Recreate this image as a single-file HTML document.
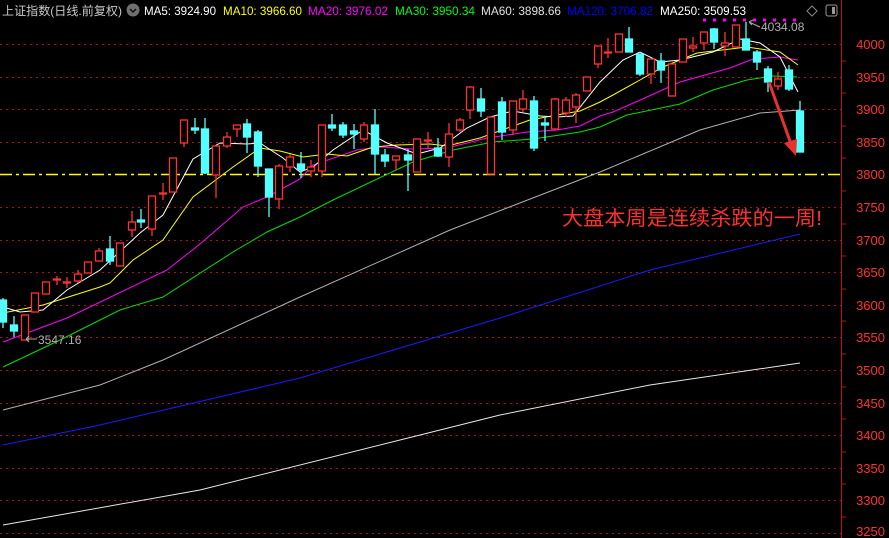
<!DOCTYPE html>
<html><head><meta charset="utf-8"><style>
html,body{margin:0;padding:0;background:#000;width:889px;height:538px;overflow:hidden}
svg{display:block}
text{font-family:"Liberation Sans","Noto Sans CJK SC",sans-serif}
</style></head><body>
<svg width="889" height="538" viewBox="0 0 889 538" xmlns="http://www.w3.org/2000/svg">
<rect width="889" height="538" fill="#000"/>
<g stroke="#b01010" stroke-width="1" stroke-dasharray="2,4">
<line x1="0" y1="44.5" x2="841" y2="44.5"/><line x1="0" y1="77.5" x2="841" y2="77.5"/>
<line x1="0" y1="109.5" x2="841" y2="109.5"/><line x1="0" y1="142.5" x2="841" y2="142.5"/>
<line x1="0" y1="207.5" x2="841" y2="207.5"/><line x1="0" y1="240.5" x2="841" y2="240.5"/>
<line x1="0" y1="272.5" x2="841" y2="272.5"/><line x1="0" y1="305.5" x2="841" y2="305.5"/>
<line x1="0" y1="337.5" x2="841" y2="337.5"/><line x1="0" y1="370.5" x2="841" y2="370.5"/>
<line x1="0" y1="403.5" x2="841" y2="403.5"/><line x1="0" y1="435.5" x2="841" y2="435.5"/>
<line x1="0" y1="468.5" x2="841" y2="468.5"/><line x1="0" y1="500.5" x2="841" y2="500.5"/>
<line x1="0" y1="533.5" x2="841" y2="533.5"/>
</g>
<line x1="0" y1="174.5" x2="841" y2="174.5" stroke="#ffff00" stroke-width="1.5" stroke-dasharray="12,4,3,4"/>
<line x1="841.5" y1="0" x2="841.5" y2="538" stroke="#c01010"/>
<g stroke="#c01010"><line x1="841" y1="61" x2="846" y2="61"/><line x1="841" y1="93" x2="846" y2="93"/><line x1="841" y1="126" x2="846" y2="126"/><line x1="841" y1="158" x2="846" y2="158"/><line x1="841" y1="191" x2="846" y2="191"/><line x1="841" y1="224" x2="846" y2="224"/><line x1="841" y1="256" x2="846" y2="256"/><line x1="841" y1="289" x2="846" y2="289"/><line x1="841" y1="321" x2="846" y2="321"/><line x1="841" y1="354" x2="846" y2="354"/><line x1="841" y1="387" x2="846" y2="387"/><line x1="841" y1="419" x2="846" y2="419"/><line x1="841" y1="452" x2="846" y2="452"/><line x1="841" y1="484" x2="846" y2="484"/><line x1="841" y1="517" x2="846" y2="517"/></g>
<g fill="#ff3232" font-size="13" text-anchor="end">
<text x="885" y="49">4000</text><text x="885" y="82">3950</text><text x="885" y="114">3900</text><text x="885" y="147">3850</text><text x="885" y="179">3800</text><text x="885" y="212">3750</text><text x="885" y="245">3700</text><text x="885" y="277">3650</text><text x="885" y="310">3600</text><text x="885" y="342">3550</text><text x="885" y="375">3500</text><text x="885" y="408">3450</text><text x="885" y="440">3400</text><text x="885" y="473">3350</text><text x="885" y="505">3300</text><text x="885" y="536">3250</text>
</g>
<g fill="none" stroke-width="1">
<polyline stroke="#e8e8e8" points="3,525 200,490 400,440 500,415 650,385 800,363"/>
<polyline stroke="#1a1aff" points="3,445 100,425 300,378 500,318 650,270 800,234"/>
<polyline stroke="#b0b0b0" points="3,410 100,385 163,360 300,297 450,230 600,172 700,130 760,113 800,110"/>
<polyline stroke="#00e000" points="3,367 60,340 120,310 163,297 233,252 267,232 300,217 333,200 413,162 453,150 493,142 533,139 580,132 600,127 627,115 680,104 713,90 747,80 773,76 797,77"/>
<polyline stroke="#ff00ff" points="3,342 67,318 167,270 200,244 243,207 267,197 300,179 313,165 357,150 380,147 413,149 447,148 487,138 527,132 557,130 580,126 600,116 613,112 647,97 680,82 730,68 753,59 780,57 798,60"/>
<polyline stroke="#ffff00" points="3,313 43,305 100,287 110,283 133,260 163,240 193,197 233,167 260,148 280,151 303,157 327,154 347,156 373,147 397,145 430,144 447,146 480,138 513,126 530,120 557,115 580,111 600,102 613,95 640,80 663,67 697,53 747,47 780,52 798,65"/>
<polyline stroke="#ffffff" points="3,307 20,312 43,310 67,290 100,270 140,233 163,215 193,159 220,143 247,144 260,143 283,158 300,172 313,167 333,150 363,130 387,143 417,154 440,148 467,128 490,117 513,111 540,116 557,117 573,116 600,82 623,60 640,52 660,62 680,60 713,52 740,39 760,43 780,57 798,92"/>
</g>
<g stroke="#ff3232" stroke-width="1.3" fill="#000">
<line x1="25" y1="315" x2="25" y2="340"/><rect x="21.5" y="315" width="7" height="25"/>
<rect x="31.5" y="293" width="7" height="19"/>
<rect x="42.5" y="282" width="7" height="12"/>
<line x1="57" y1="276" x2="57" y2="285"/><rect x="53.5" y="279" width="7" height="1"/>
<line x1="67" y1="277" x2="67" y2="288"/><rect x="63.5" y="282" width="7" height="1"/>
<line x1="78" y1="270" x2="78" y2="283"/><rect x="74.5" y="274" width="7" height="7"/>
<rect x="84.5" y="262" width="7" height="11"/>
<line x1="99" y1="248" x2="99" y2="251"/><rect x="95.5" y="251" width="7" height="10"/>
<rect x="116.5" y="243" width="7" height="23"/>
<line x1="132" y1="211" x2="132" y2="237"/><rect x="128.5" y="222" width="7" height="8"/>
<line x1="152" y1="229" x2="152" y2="236"/><rect x="148.5" y="196" width="7" height="33"/>
<line x1="163" y1="183" x2="163" y2="200"/><rect x="159.5" y="193" width="7" height="1"/>
<rect x="169.5" y="158" width="7" height="34"/>
<line x1="184" y1="143" x2="184" y2="147"/><rect x="180.5" y="120" width="7" height="23"/>
<line x1="216" y1="175" x2="216" y2="198"/><rect x="212.5" y="146" width="7" height="29"/>
<line x1="227" y1="132" x2="227" y2="148"/><rect x="223.5" y="137" width="7" height="9"/>
<line x1="237" y1="129" x2="237" y2="137"/><rect x="233.5" y="125" width="7" height="4"/>
<line x1="279" y1="164" x2="279" y2="209"/><rect x="275.5" y="166" width="7" height="33"/>
<line x1="290" y1="154" x2="290" y2="172"/><rect x="286.5" y="157" width="7" height="10"/>
<line x1="311" y1="160" x2="311" y2="177"/><rect x="307.5" y="167" width="7" height="4"/>
<line x1="322" y1="171" x2="322" y2="177"/><rect x="318.5" y="125" width="7" height="46"/>
<line x1="364" y1="122" x2="364" y2="142"/><rect x="360.5" y="125" width="7" height="14"/>
<line x1="396" y1="160" x2="396" y2="170"/><rect x="392.5" y="156" width="7" height="4"/>
<rect x="413.5" y="139" width="7" height="33"/>
<line x1="428" y1="132" x2="428" y2="148"/><rect x="424.5" y="140" width="7" height="1"/>
<line x1="449" y1="123" x2="449" y2="167"/><rect x="445.5" y="134" width="7" height="23"/>
<line x1="460" y1="118" x2="460" y2="132"/><rect x="456.5" y="120" width="7" height="10"/>
<line x1="470" y1="86" x2="470" y2="119"/><rect x="466.5" y="87" width="7" height="23"/>
<rect x="487.5" y="117" width="7" height="57"/>
<line x1="513" y1="130" x2="513" y2="135"/><rect x="509.5" y="101" width="7" height="29"/>
<line x1="523" y1="90" x2="523" y2="112"/><rect x="519.5" y="99" width="7" height="10"/>
<line x1="555" y1="98" x2="555" y2="130"/><rect x="551.5" y="99" width="7" height="30"/>
<line x1="566" y1="97" x2="566" y2="117"/><rect x="562.5" y="100" width="7" height="13"/>
<line x1="576" y1="93" x2="576" y2="123"/><rect x="572.5" y="95" width="7" height="12"/>
<rect x="583.5" y="77" width="7" height="14"/>
<line x1="598" y1="64" x2="598" y2="68"/><rect x="594.5" y="46" width="7" height="18"/>
<line x1="608" y1="38" x2="608" y2="58"/><rect x="604.5" y="52" width="7" height="1"/>
<rect x="615.5" y="34" width="7" height="18"/>
<line x1="651" y1="74" x2="651" y2="84"/><rect x="647.5" y="59" width="7" height="15"/>
<rect x="668.5" y="64" width="7" height="32"/>
<rect x="679.5" y="39" width="7" height="23"/>
<line x1="693" y1="37" x2="693" y2="52"/><rect x="689.5" y="46" width="7" height="2"/>
<line x1="704" y1="43" x2="704" y2="50"/><rect x="700.5" y="32" width="7" height="11"/>
<line x1="725" y1="32" x2="725" y2="56"/><rect x="721.5" y="43" width="7" height="3"/>
<rect x="732.5" y="25" width="7" height="22"/>
<line x1="778" y1="72" x2="778" y2="90"/><rect x="774.5" y="79" width="7" height="7"/>
</g>
<g stroke="#54ffff" stroke-width="1.3" fill="#54ffff">
<line x1="3" y1="298" x2="3" y2="328"/><rect x="-0.5" y="300" width="7" height="22"/>
<line x1="14" y1="316" x2="14" y2="337"/><rect x="10.5" y="325" width="7" height="6"/>
<line x1="110" y1="236" x2="110" y2="265"/><rect x="106.5" y="249" width="7" height="12"/>
<line x1="141" y1="209" x2="141" y2="228"/><rect x="137.5" y="220" width="7" height="2"/>
<line x1="195" y1="118" x2="195" y2="134"/><rect x="191.5" y="128" width="7" height="2"/>
<line x1="205" y1="118" x2="205" y2="174"/><rect x="201.5" y="129" width="7" height="44"/>
<line x1="247" y1="119" x2="247" y2="153"/><rect x="243.5" y="124" width="7" height="13"/>
<line x1="258" y1="130" x2="258" y2="177"/><rect x="254.5" y="132" width="7" height="34"/>
<line x1="269" y1="169" x2="269" y2="217"/><rect x="265.5" y="169" width="7" height="28"/>
<line x1="301" y1="152" x2="301" y2="178"/><rect x="297.5" y="164" width="7" height="6"/>
<line x1="332" y1="114" x2="332" y2="131"/><rect x="328.5" y="125" width="7" height="3"/>
<line x1="343" y1="122" x2="343" y2="138"/><rect x="339.5" y="125" width="7" height="10"/>
<line x1="354" y1="124" x2="354" y2="149"/><rect x="350.5" y="131" width="7" height="3"/>
<line x1="375" y1="109" x2="375" y2="174"/><rect x="371.5" y="125" width="7" height="29"/>
<line x1="385" y1="149" x2="385" y2="167"/><rect x="381.5" y="155" width="7" height="6"/>
<line x1="408" y1="149" x2="408" y2="191"/><rect x="404.5" y="155" width="7" height="5"/>
<line x1="438" y1="138" x2="438" y2="157"/><rect x="434.5" y="148" width="7" height="8"/>
<line x1="481" y1="88" x2="481" y2="117"/><rect x="477.5" y="99" width="7" height="12"/>
<line x1="502" y1="97" x2="502" y2="140"/><rect x="498.5" y="102" width="7" height="30"/>
<line x1="534" y1="96" x2="534" y2="151"/><rect x="530.5" y="101" width="7" height="47"/>
<line x1="545" y1="116" x2="545" y2="141"/><rect x="541.5" y="123" width="7" height="2"/>
<line x1="629" y1="27" x2="629" y2="52"/><rect x="625.5" y="39" width="7" height="13"/>
<line x1="640" y1="54" x2="640" y2="76"/><rect x="636.5" y="54" width="7" height="20"/>
<line x1="661" y1="53" x2="661" y2="83"/><rect x="657.5" y="61" width="7" height="9"/>
<line x1="714" y1="28" x2="714" y2="49"/><rect x="710.5" y="29" width="7" height="13"/>
<line x1="746" y1="22" x2="746" y2="50"/><rect x="742.5" y="39" width="7" height="11"/>
<line x1="757" y1="50" x2="757" y2="70"/><rect x="753.5" y="52" width="7" height="10"/>
<line x1="768" y1="66" x2="768" y2="92"/><rect x="764.5" y="69" width="7" height="13"/>
<line x1="789" y1="65" x2="789" y2="91"/><rect x="785.5" y="70" width="7" height="19"/>
<line x1="800" y1="101" x2="800" y2="152"/><rect x="796.5" y="111" width="7" height="41"/>
</g>
<line x1="703" y1="20" x2="802" y2="20" stroke="#ff00ff" stroke-width="3" stroke-dasharray="3,7"/>
<path d="M749,22 L760,27 M749,22 L753,20 M749,22 L752,25" stroke="#aaa" fill="none"/>
<text x="761" y="31" fill="#b0b0b0" font-size="12">4034.08</text>
<path d="M26,339 L37,339 M26,339 L29,336 M26,339 L29,342" stroke="#aaa" fill="none"/>
<text x="38" y="344" fill="#b0b0b0" font-size="12">3547.16</text>
<line x1="769" y1="82" x2="791" y2="144" stroke="#e83030" stroke-width="3"/>
<path d="M796,156 L784,143 L797,139 Z" fill="#e83030"/>
<text x="562" y="225" fill="#ff3030" font-size="20" textLength="260" lengthAdjust="spacingAndGlyphs">大盘本周是连续杀跌的一周!</text>
<g font-size="12">
<text x="2" y="15" fill="#c8c8c8" textLength="120" lengthAdjust="spacingAndGlyphs">上证指数(日线.前复权)</text>
<circle cx="133" cy="10" r="6.5" fill="#707070"/>
<path d="M130,9 L133,12 L136,9" stroke="#111" stroke-width="1.5" fill="none"/>
<text x="144" y="15" fill="#ffffff" textLength="72" lengthAdjust="spacingAndGlyphs">MA5: 3924.90</text>
<text x="223" y="15" fill="#ffff00" textLength="79" lengthAdjust="spacingAndGlyphs">MA10: 3966.60</text>
<text x="308" y="15" fill="#ff00ff" textLength="80" lengthAdjust="spacingAndGlyphs">MA20: 3976.02</text>
<text x="395" y="15" fill="#00ff00" textLength="80" lengthAdjust="spacingAndGlyphs">MA30: 3950.34</text>
<text x="481" y="15" fill="#e0e0e0" textLength="80" lengthAdjust="spacingAndGlyphs">MA60: 3898.66</text>
<text x="567" y="15" fill="#0000ff" textLength="86" lengthAdjust="spacingAndGlyphs">MA120: 3706.82</text>
<text x="660" y="15" fill="#ffffff" textLength="86" lengthAdjust="spacingAndGlyphs">MA250: 3509.53</text>
</g>
<path d="M812,6 L817,11 L812,16 L807,11 Z" stroke="#888" fill="none"/>
<rect x="826" y="5" width="11" height="11" rx="2" stroke="#999" fill="none"/>
<rect x="832" y="7" width="3" height="7" fill="#999"/>
</svg>
</body></html>
